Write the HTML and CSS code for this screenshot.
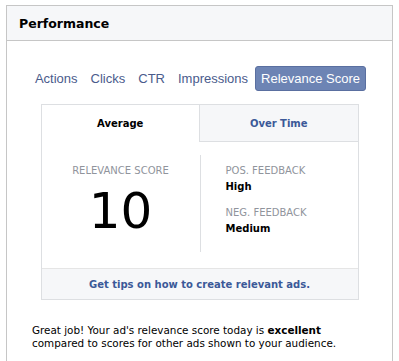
FILE: index.html
```html
<!DOCTYPE html>
<html lang="en">
  <head>
    <meta charset="UTF-8" />
    <title>Performance</title>
    <link rel="stylesheet" href="styles.css">
  </head>
  <body>
    <div class="panel">
      <div class="panel_head">Performance</div>
      <div class="panel_body">
        <div class="metric_tabs">
          <span class="metric">Actions</span>
          <span class="metric">Clicks</span>
          <span class="metric">CTR</span>
          <span class="metric">Impressions</span>
          <span class="metric active">Relevance Score</span>
        </div>
        <div class="card">
          <div class="card_tabs">
            <div class="card_tab selected">Average</div>
            <div class="card_tab">Over Time</div>
          </div>
          <div class="card_content">
            <div class="score">
              <div class="label">RELEVANCE SCORE</div>
              <div class="big_number">10</div>
            </div>
            <div class="feedback">
              <div class="label">POS. FEEDBACK</div>
              <div class="value">High</div>
              <div class="label second">NEG. FEEDBACK</div>
              <div class="value">Medium</div>
            </div>
          </div>
          <div class="card_footer">Get tips on how to create relevant ads.</div>
        </div>
        <p class="summary">
          Great job! Your ad's relevance score today is <b>excellent</b>
          compared to scores for other ads shown to your audience.
        </p>
      </div>
    </div>
  </body>
</html>
```

FILE: styles.css
```css
* {
  box-sizing: border-box;
  padding: 0;
  margin: 0;
}
body {
  height: 100vh;
  background-color: #fff;
  font-family: "DejaVu Sans", sans-serif;
  color: #1d2129;
  overflow: hidden;
}
.panel {
  margin: 5px 6px 0 6px;
  border: 1px solid #c6c6c6;
  border-bottom: none;
  height: calc(100vh - 5px);
}
.panel_head {
  height: 35px;
  background-color: #f6f7f9;
  border-bottom: 1px solid #c6c6c6;
  padding: 1px 12px 0;
  display: flex;
  align-items: center;
  font-weight: bold;
  font-size: 12.5px;
  color: #000;
}
.panel_body {
  padding-top: 25px;
}
.metric_tabs {
  display: flex;
  justify-content: center;
  gap: 1px;
  padding-right: 4px;
  font-family: "Liberation Sans", sans-serif;
  font-size: 13px;
}
.metric {
  padding: 5px 5px;
  border: 1px solid transparent;
  border-radius: 3px;
  color: #4a5b8c;
  line-height: 13px;
}
.metric.active {
  background-color: #6d84b4;
  border-color: #5a6fa0;
  color: #fff;
}
.card {
  width: 318px;
  margin: 13px auto 0;
  border: 1px solid #dddfe2;
}
.card_tabs {
  display: flex;
  height: 37px;
}
.card_tab {
  flex: 1;
  display: flex;
  align-items: center;
  justify-content: center;
  font-size: 10px;
  font-weight: bold;
  color: #3b5998;
  background-color: #f6f7f9;
  border-left: 1px solid #dddfe2;
  border-bottom: 1px solid #dddfe2;
}
.card_tab.selected {
  background-color: #fff;
  color: #000;
  border: none;
}
.card_content {
  display: flex;
  padding: 13px 0 16px;
}
.score {
  width: 158px;
  padding-top: 9px;
  text-align: center;
}
.label {
  font-size: 10px;
  color: #90949c;
  line-height: 13px;
}
.big_number {
  margin-top: 5px;
  font-size: 50px;
  line-height: 58px;
  color: #000;
}
.feedback {
  flex: 1;
  border-left: 1px solid #dddfe2;
  padding: 8px 0 0 25px;
  height: 97px;
}
.feedback .label,
.value {
  line-height: 16px;
}
.value {
  font-size: 10px;
  font-weight: bold;
  color: #000;
}
.label.second {
  margin-top: 10px;
}
.card_footer {
  height: 31px;
  background-color: #f6f7f9;
  border-top: 1px solid #e5e5e5;
  display: flex;
  align-items: center;
  justify-content: center;
  font-size: 10px;
  font-weight: bold;
  color: #3b5998;
}
.summary {
  margin: 24px 40px 0 25px;
  font-size: 10.4px;
  line-height: 13px;
  color: #000;
}
```
